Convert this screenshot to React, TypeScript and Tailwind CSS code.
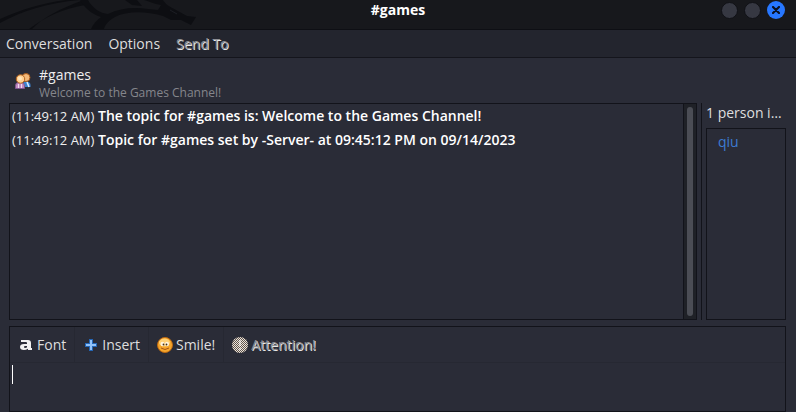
import React from "react";

const messages = [
  { time: "(11:49:12 AM)", text: "The topic for #games is: Welcome to the Games Channel!" },
  { time: "(11:49:12 AM)", text: "Topic for #games set by -Server- at 09:45:12 PM on 09/14/2023" },
];

function DragonMark() {
  return (
    <svg className="absolute left-0 top-0" width="200" height="29" viewBox="0 0 200 29" fill="none" aria-hidden="true">
      <path d="M0 23 C22 11 46 3 80 0 H66 C42 3 20 10 0 19Z" fill="#0d0e12" />
      <path d="M29 29 C45 17 62 9 85 5 L81 1 C62 8 43 17 32 29Z" fill="#0d0e12" />
      <path d="M80 0 H88 C93 9 100 13 108 14 C120 8 134 7 148 9 L158 10 L161 5 C154 4 148 1 144 0 H163 C165 4 170 7 176 10 L187 16 L196 17 L191 25 L181 20 L171 20 L163 16 C145 11 127 11 115 17 C108 21 105 25 104 29 H91 C93 24 97 20 101 17 C91 14 84 7 80 0Z" fill="#0d0e12" />
      <path d="M125 0 L132 5 L142 6 L137 0Z" fill="#0d0e12" />
      <path d="M170 10 L177 14" stroke="#1c1e24" />
    </svg>
  );
}

function PeopleIcon() {
  return (
    <svg width="16" height="16" viewBox="0 0 16 16" aria-hidden="true">
      <path d="M8 15 V11 Q8 8.500 11 8.500 Q15.500 8.500 15.500 12 V14 H8Z" fill="#3c83cf" />
      <path d="M12 9 L14 14" stroke="#d9edff" strokeWidth="1.500" />
      <circle cx="11" cy="4.500" r="4" fill="#f3b979" stroke="#a75818" />
      <path d="M.5 15.500 V12.500 Q.5 9.500 4 9.500 H6 Q9.500 9.500 9.500 13 V15.500Z" fill="#c18bc0" stroke="#80558f" />
      <path d="M3.500 11 V15 M6.500 11 V15" stroke="#f2d9ed" />
      <circle cx="5.500" cy="6" r="4.200" fill="#ffd092" stroke="#b7651d" />
      <circle cx="5" cy="5.500" r="2" fill="#ffe6bb" />
    </svg>
  );
}

function FontIcon() {
  return (
    <svg width="12" height="14" viewBox="0 0 12 14" aria-hidden="true">
      <path d="M1 4 V2 H8 Q11 2 11 5 V10 H12 V12 H8 V10.800 Q6 12 4 12 Q0 12 0 9 Q0 6 4 6 H7 V5 Q7 4 6 4Z M7 8 H5 Q4 8 4 9 Q4 10 5 10 Q7 10 7 9Z" fill="#f1f1f1" fillRule="evenodd" />
    </svg>
  );
}

function PlusIcon() {
  return (
    <svg width="12" height="12" viewBox="0 0 12 12" aria-hidden="true">
      <path d="M4 0 H8 V4 H12 V8 H8 V12 H4 V8 H0 V4 H4Z" fill="#2466b5" />
      <path d="M5 1 H7 V5 H11 V7 H7 V11 H5 V7 H1 V5 H5Z" fill="#91c2f8" />
    </svg>
  );
}

function SmileIcon() {
  return (
    <svg width="16" height="16" viewBox="0 0 16 16" aria-hidden="true">
      <circle cx="8" cy="8" r="7.500" fill="#f5a62c" stroke="#be6912" />
      <ellipse cx="7.500" cy="5.500" rx="5.500" ry="4" fill="#ffd175" />
      <ellipse cx="5.500" cy="7" rx="2" ry="2.300" fill="#fff3dc" />
      <ellipse cx="10" cy="7" rx="2" ry="2.300" fill="#fff3dc" />
      <circle cx="6.500" cy="7.500" r=".9" fill="#473019" />
      <circle cx="9.500" cy="7.500" r=".9" fill="#473019" />
      <path d="M4 11 Q8 14 12 11" stroke="#a85316" fill="none" />
    </svg>
  );
}

function AttentionIcon() {
  return (
    <svg width="16" height="16" viewBox="0 0 16 16" aria-hidden="true">
      <defs>
        <pattern id="stipple" width="2" height="2" patternUnits="userSpaceOnUse">
          <rect width="1" height="1" fill="#eee5da" />
          <rect x="1" y="1" width="1" height="1" fill="#eee5da" />
          <rect x="1" width="1" height="1" fill="#5e554f" />
          <rect y="1" width="1" height="1" fill="#5e554f" />
        </pattern>
      </defs>
      <circle cx="8" cy="8" r="8" fill="url(#stipple)" />
      <path d="M8 3 V9 M8 11 V13" stroke="#ffffff" strokeWidth="2" opacity=".5" />
    </svg>
  );
}

const menuButton = "text-[14px] leading-5 text-[#dededf]";
const insensitive = "text-[#8f9095] [text-shadow:1px_1px_0_#e8e8e8]";
const tool = "flex h-full items-center border-r border-[#262832] text-[14px] leading-5 text-[#dededf]";

export default function App() {
  return (
    <div className="flex h-screen min-h-80 flex-col bg-[#2a2c37] font-['Open_Sans','Noto_Sans',sans-serif] text-[14px] text-[#eeeeee]">
      <header className="relative flex h-[30px] shrink-0 items-start justify-center border-b border-[#0e0f14] bg-[#17181c]">
        <DragonMark />
        <h1 className="relative text-[14px] leading-5 font-bold text-white">#games</h1>
        <div className="absolute top-0 right-[11px] flex h-5 items-center gap-[6px]">
          <button aria-label="Minimize" className="size-[17px] rounded-full border border-[#101116] bg-[#363842]" />
          <button aria-label="Maximize" className="size-[17px] rounded-full border border-[#101116] bg-[#363842]" />
          <button aria-label="Close" className="flex size-[18px] items-center justify-center rounded-full bg-[#2777ff]">
            <svg width="8" height="8" viewBox="0 0 8 8" aria-hidden="true">
              <path d="M1 1 L7 7 M7 1 L1 7" stroke="#0b1020" strokeWidth="2.200" strokeLinecap="round" />
            </svg>
          </button>
        </div>
      </header>

      <nav className="flex h-7 shrink-0 items-center gap-4 border-b border-[#14151c] bg-[#23252e] px-[6px]">
        <button className={menuButton}>Conversation</button>
        <button className={menuButton}>Options</button>
        <button disabled className={`text-[14px] leading-5 ${insensitive}`}>Send To</button>
      </nav>

      <main className="flex min-h-0 flex-1 flex-col pr-[10px] pl-[9px]">
        <section className="flex h-[45px] shrink-0 items-center gap-2 pl-[6px]">
          <PeopleIcon />
          <div className="pt-1">
            <h2 className="text-[14px] leading-5">#games</h2>
            <p className="text-[12px] leading-4 text-[#85868c]">Welcome to the Games Channel!</p>
          </div>
        </section>

        <div className="flex min-h-0 flex-1">
          <section className="flex min-w-0 flex-1 border border-[#12131a]">
            <div className="min-w-0 flex-1 px-[2px]">
              {messages.map((m) => (
                <p key={m.text} className="text-[14px] leading-6">
                  <time className="text-[13px]">{m.time}</time> <b className="font-semibold text-white">{m.text}</b>
                </p>
              ))}
            </div>
            <div className="flex w-[13px] justify-center border-l border-[#12131a] bg-[#1f2127] py-[3px]">
              <div className="w-[6px] rounded-full bg-[#4b4d55]" />
            </div>
          </section>
          <aside className="ml-1 flex w-[85px] flex-col border-l border-[#12131a] pl-1">
            <h3 className="h-[25px] text-[14px] leading-5 font-normal whitespace-nowrap text-[#dededf]">1 person i…</h3>
            <ul className="min-h-0 flex-1 border border-[#12131a] px-[11px] pt-[2px]">
              <li>
                <button className="text-[14px] leading-5 text-[#3d7bd1]">qiu</button>
              </li>
            </ul>
          </aside>
        </div>

        <section className="mt-[6px] flex h-[86px] shrink-0 flex-col border border-[#12131a]">
          <div className="flex h-9 shrink-0 border-b border-[#262832]">
            <button className={`${tool} gap-[5px] pr-2 pl-[10px]`}><FontIcon />Font</button>
            <button className={`${tool} gap-[5px] pr-2 pl-[10px]`}><PlusIcon />Insert</button>
            <button className={`${tool} gap-[3px] px-2`}><SmileIcon />Smile!</button>
            <button disabled className={`flex h-full items-center gap-[3px] px-2 text-[14px] leading-5 ${insensitive}`}>
              <AttentionIcon />Attention!
            </button>
          </div>
          <div className="relative min-h-0 flex-1">
            <textarea aria-label="Message" className="block size-full resize-none bg-transparent px-[2px] py-[2px] text-[14px] leading-5 caret-transparent outline-none" />
            <span className="pointer-events-none absolute top-[2px] left-[2px] h-[19px] w-px bg-white" />
          </div>
        </section>
      </main>
    </div>
  );
}
